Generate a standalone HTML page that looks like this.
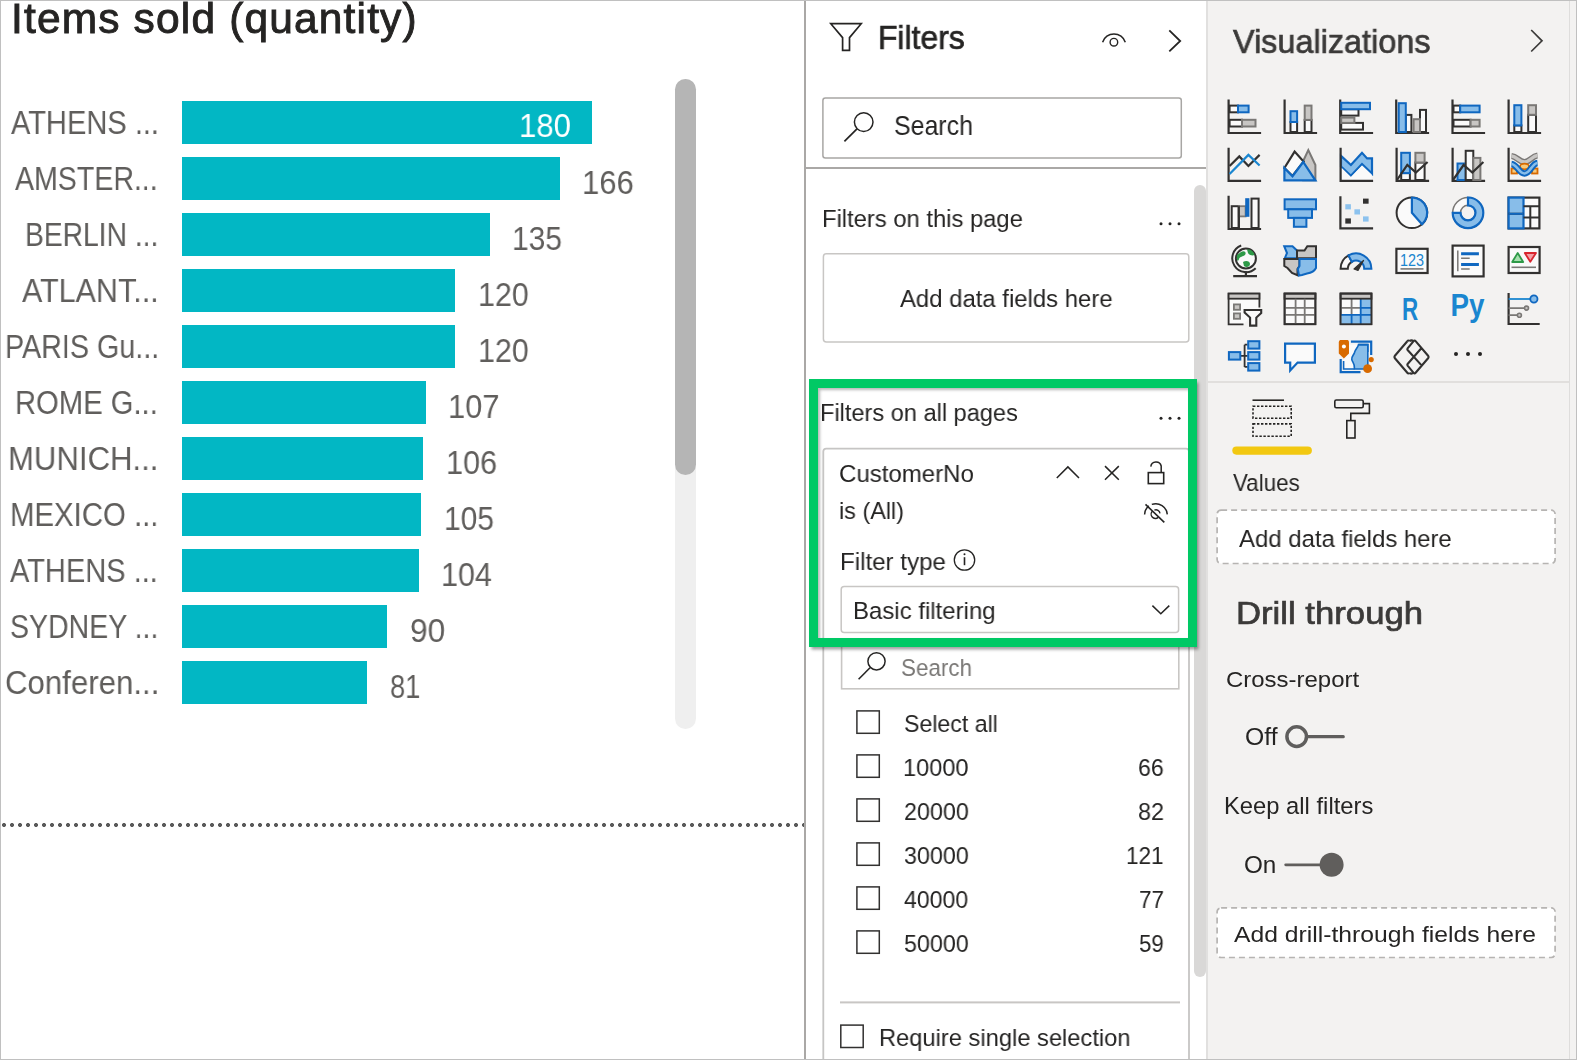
<!DOCTYPE html>
<html><head><meta charset="utf-8"><title>Power BI Filters</title>
<style>
html,body{margin:0;padding:0;}
body{width:1577px;height:1060px;position:relative;overflow:hidden;background:#fff;font-family:"Liberation Sans",sans-serif;}
.t{position:absolute;white-space:nowrap;transform-origin:0 0;will-change:transform;}
.bar{position:absolute;left:182px;height:43px;background:#02b7c4;}
#canvas{position:absolute;left:0;top:0;width:805px;height:1060px;background:#fff;overflow:hidden;}
#track{position:absolute;left:675px;top:79px;width:21px;height:650px;border-radius:10.5px;background:#efefef;}
#thumb{position:absolute;left:675px;top:79px;width:21px;height:396px;border-radius:10.5px;background:#b5b5b5;}
#dots{position:absolute;left:0;top:821px;width:805px;height:8px;background:radial-gradient(circle at 4px 4px,#5a5a5a 0,#5a5a5a 1.7px,rgba(90,90,90,0) 2.3px) 0 0/8px 8px repeat-x;}
#fsep{position:absolute;left:804px;top:0;width:2px;height:1060px;background:#aaa8a6;}
#fpane{position:absolute;left:806px;top:0;width:400px;height:1060px;background:#fff;}
#fthumb{position:absolute;left:1194px;top:185px;width:12px;height:792px;border-radius:6px;background:#d9d8d7;}
#vsep{position:absolute;left:1206px;top:0;width:2px;height:1060px;background:#e1e0df;}
#vpane{position:absolute;left:1208px;top:0;width:369px;height:1060px;background:#f3f2f1;}
#vline{position:absolute;left:1568.5px;top:0;width:1.6px;height:1060px;background:#dedddc;}
#frame{position:absolute;left:0;top:0;width:1575px;height:1058px;border:1px solid #c0c0c0;}
svg{position:absolute;left:0;top:0;}
#shadow{position:absolute;left:809px;top:379px;width:388px;height:268px;box-shadow:1.5px 2.5px 3px rgba(0,0,0,0.38);}
#ishadow{position:absolute;left:818px;top:388px;width:370px;height:250px;box-shadow:inset 2px 2px 3px rgba(0,0,0,0.28);}
</style></head><body>
<div id="canvas">
<div class="bar" style="top:101px;width:409.9px"></div><div class="bar" style="top:157px;width:378.1px"></div><div class="bar" style="top:213px;width:307.5px"></div><div class="bar" style="top:269px;width:273.3px"></div><div class="bar" style="top:325px;width:273.3px"></div><div class="bar" style="top:381px;width:243.7px"></div><div class="bar" style="top:437px;width:241.4px"></div><div class="bar" style="top:493px;width:239.1px"></div><div class="bar" style="top:549px;width:236.9px"></div><div class="bar" style="top:605px;width:205.0px"></div><div class="bar" style="top:661px;width:184.5px"></div>
<div id="track"></div><div id="thumb"></div>
<div id="dots"></div>
</div>
<div id="fsep"></div>
<div id="fpane"></div>
<div id="fthumb"></div>
<div id="vsep"></div>
<div id="vpane"></div>
<div id="vline"></div>
<svg width="1577" height="1060" viewBox="0 0 1577 1060">
<path d="M830.8,23.7 H861.2 L849.5,37.6 V50.3 H842.6 V37.6 Z" fill="none" stroke="#252423" stroke-width="1.7" stroke-linejoin="miter"/>
<path d="M1102.6,42.2 A11.9,11.9 0 0 1 1125.3,42.2" fill="none" stroke="#252423" stroke-width="1.5"/>
<circle cx="1113.9" cy="42.2" r="3.8" fill="none" stroke="#252423" stroke-width="1.4"/>
<path d="M1169.3,30.3 L1180.2,41 L1169.3,51.3" fill="none" stroke="#252423" stroke-width="1.8"/>
<rect x="822.9" y="97.9" width="358.4" height="60" rx="2.5" fill="#fff" stroke="#a8a6a4" stroke-width="1.5"/>
<circle cx="863.7" cy="122.1" r="9.3" fill="none" stroke="#252423" stroke-width="1.5"/>
<path d="M844.4,141.3 L857,128.8" stroke="#252423" stroke-width="1.7"/>
<rect x="806" y="167" width="400" height="2" fill="#aaa8a6"/>
<circle cx="1161" cy="223.8" r="1.5" fill="#252423"/>
<circle cx="1170" cy="223.8" r="1.5" fill="#252423"/>
<circle cx="1179" cy="223.8" r="1.5" fill="#252423"/>
<circle cx="1161" cy="418.3" r="1.5" fill="#252423"/>
<circle cx="1170" cy="418.3" r="1.5" fill="#252423"/>
<circle cx="1179" cy="418.3" r="1.5" fill="#252423"/>
<rect x="823.4" y="253.8" width="365.4" height="88.3" rx="3" fill="#fff" stroke="#c8c6c4" stroke-width="1.5"/>
<rect x="823.3" y="448.6" width="365.7" height="700" rx="3" fill="#fff" stroke="#c6c5c4" stroke-width="1.8"/>
<path d="M1056.8,478 L1067.9,466.9 L1079,478" fill="none" stroke="#252423" stroke-width="1.5"/>
<path d="M1105,466.1 L1118.8,479.8 M1118.8,466.1 L1105,479.8" stroke="#252423" stroke-width="1.5"/>
<rect x="1148.3" y="472.6" width="15.4" height="11" fill="none" stroke="#252423" stroke-width="1.6"/>
<path d="M1150.8,466.6 A5.3,5.3 0 0 1 1161.2,466 V472.6" fill="none" stroke="#252423" stroke-width="1.5"/>
<path d="M1144.6,514.4 A11.6,11.6 0 0 1 1148.8,505.8 M1151.8,504.4 A11.6,11.6 0 0 1 1167.3,514.4" fill="none" stroke="#252423" stroke-width="1.5"/>
<path d="M1145.5,504.4 L1164.3,522.4" stroke="#252423" stroke-width="1.6"/>
<path d="M1152.6,511 A4,4 0 0 0 1158.2,517.4 M1154.4,510.2 A4,4 0 0 1 1160,513.4" fill="none" stroke="#252423" stroke-width="1.4"/>
<circle cx="964.5" cy="560" r="10.2" fill="none" stroke="#252423" stroke-width="1.3"/>
<rect x="963.7" y="557.2" width="1.6" height="8" fill="#252423"/><circle cx="964.5" cy="554.2" r="1" fill="#252423"/>
<rect x="841.2" y="586.4" width="337.4" height="46" rx="3" fill="#fff" stroke="#c8c6c4" stroke-width="1.5"/>
<path d="M1152.4,605.6 L1160.8,613.8 L1169.3,605.6" fill="none" stroke="#252423" stroke-width="1.5"/>
<rect x="841.6" y="640" width="337.2" height="48.8" fill="#fff" stroke="#c8c6c4" stroke-width="1.6"/>
<circle cx="876.5" cy="661.3" r="8.6" fill="none" stroke="#252423" stroke-width="1.5"/>
<path d="M858.6,679.2 L870,667.8" stroke="#252423" stroke-width="1.6"/>
<rect x="856.9" y="710.9" width="22.4" height="22.4" fill="#fff" stroke="#323130" stroke-width="1.5"/>
<rect x="856.9" y="754.9" width="22.4" height="22.4" fill="#fff" stroke="#323130" stroke-width="1.5"/>
<rect x="856.9" y="798.9" width="22.4" height="22.4" fill="#fff" stroke="#323130" stroke-width="1.5"/>
<rect x="856.9" y="842.9" width="22.4" height="22.4" fill="#fff" stroke="#323130" stroke-width="1.5"/>
<rect x="856.9" y="886.9" width="22.4" height="22.4" fill="#fff" stroke="#323130" stroke-width="1.5"/>
<rect x="856.9" y="930.9" width="22.4" height="22.4" fill="#fff" stroke="#323130" stroke-width="1.5"/>
<rect x="840" y="1001.4" width="340" height="2" fill="#c8c6c4"/>
<rect x="840.8" y="1025.1" width="22.4" height="22.4" fill="#fff" stroke="#323130" stroke-width="1.5"/>
<rect x="813.5" y="383.5" width="379" height="259" fill="none" stroke="#00c965" stroke-width="9"/>
<path d="M1531.2,30 L1542,40.8 L1531.2,51.5" fill="none" stroke="#3b3a39" stroke-width="1.7"/>
<g transform="translate(1227,100)"><path d="M1.6,0.6 V33 H33" fill="none" stroke="#323130" stroke-width="2.2" stroke-linecap="square"/><rect x="2.60" y="5.60" width="8.40" height="6.70" fill="#fafafa" stroke="#323130" stroke-width="2"/><rect x="11.00" y="5.60" width="10.60" height="6.70" fill="#88bde9" stroke="#0f67c0" stroke-width="2"/><rect x="2.60" y="19.80" width="12.40" height="6.70" fill="#fafafa" stroke="#323130" stroke-width="2"/><rect x="15.00" y="19.80" width="13.50" height="6.70" fill="#c8c6c4" stroke="#7a7876" stroke-width="2"/></g>
<g transform="translate(1283,100)"><path d="M1.6,0.6 V33 H33" fill="none" stroke="#323130" stroke-width="2.2" stroke-linecap="square"/><rect x="7.50" y="22.00" width="6.60" height="10.00" fill="#fafafa" stroke="#323130" stroke-width="2"/><rect x="7.50" y="11.20" width="6.60" height="10.80" fill="#88bde9" stroke="#0f67c0" stroke-width="2"/><rect x="21.70" y="19.90" width="6.80" height="12.10" fill="#fafafa" stroke="#323130" stroke-width="2"/><rect x="21.70" y="5.60" width="6.80" height="14.30" fill="#c8c6c4" stroke="#7a7876" stroke-width="2"/></g>
<g transform="translate(1339,100)"><path d="M1.2,0.6 V33 H33" fill="none" stroke="#323130" stroke-width="2.2" stroke-linecap="square"/><rect x="2.20" y="9.20" width="17.30" height="6.40" fill="#fafafa" stroke="#323130" stroke-width="2"/><rect x="2.20" y="2.80" width="28.80" height="6.40" fill="#88bde9" stroke="#0f67c0" stroke-width="2"/><rect x="2.20" y="22.90" width="21.80" height="6.70" fill="#fafafa" stroke="#323130" stroke-width="2"/><rect x="2.20" y="17.60" width="13.20" height="5.30" fill="#c8c6c4" stroke="#7a7876" stroke-width="2"/></g>
<g transform="translate(1395,100)"><path d="M1.2,0.6 V33 H33" fill="none" stroke="#323130" stroke-width="2.2" stroke-linecap="square"/><rect x="10.80" y="14.90" width="5.60" height="17.10" fill="#fafafa" stroke="#323130" stroke-width="2"/><rect x="25.00" y="9.90" width="6.00" height="22.10" fill="#fafafa" stroke="#323130" stroke-width="2"/><rect x="18.60" y="19.20" width="6.40" height="12.80" fill="#c8c6c4" stroke="#7a7876" stroke-width="2"/><rect x="3.70" y="3.20" width="7.10" height="28.80" fill="#88bde9" stroke="#0f67c0" stroke-width="2"/></g>
<g transform="translate(1451,100)"><path d="M1.5,0.6 V33 H33" fill="none" stroke="#323130" stroke-width="2.2" stroke-linecap="square"/><rect x="2.50" y="5.60" width="6.70" height="6.70" fill="#fafafa" stroke="#323130" stroke-width="2"/><rect x="9.20" y="5.60" width="19.40" height="6.70" fill="#88bde9" stroke="#0f67c0" stroke-width="2"/><rect x="2.50" y="19.80" width="17.10" height="6.70" fill="#fafafa" stroke="#323130" stroke-width="2"/><rect x="19.60" y="19.80" width="9.00" height="6.70" fill="#c8c6c4" stroke="#7a7876" stroke-width="2"/></g>
<g transform="translate(1507,100)"><path d="M1.6,0.6 V33 H33" fill="none" stroke="#323130" stroke-width="2.2" stroke-linecap="square"/><rect x="7.30" y="25.40" width="7.10" height="6.60" fill="#fafafa" stroke="#323130" stroke-width="2"/><rect x="7.30" y="5.20" width="7.10" height="20.20" fill="#88bde9" stroke="#0f67c0" stroke-width="2"/><rect x="21.20" y="14.80" width="7.80" height="17.20" fill="#fafafa" stroke="#323130" stroke-width="2"/><rect x="21.20" y="5.20" width="7.80" height="9.60" fill="#c8c6c4" stroke="#7a7876" stroke-width="2"/></g>
<g transform="translate(1227,148)"><path d="M1.6,0.8 V32.8 H33" fill="none" stroke="#323130" stroke-width="2.2" stroke-linecap="square"/><polyline points="2.6,18 12.3,8.4 21.4,18 32.6,6.9" fill="none" stroke="#323130" stroke-width="2.2"/><polyline points="2.6,26.1 21.4,6.9 32.6,17.5" fill="none" stroke="#1a86d0" stroke-width="2.2"/></g>
<g transform="translate(1283,148)"><polygon points="20.2,13 25.3,2 32.4,17 32.4,32.2 20.2,32.2" fill="#c8c6c4" stroke="#7a7876" stroke-width="2"/><polygon points="1.4,20 11.6,3.6 20.6,13.6 9.5,28" fill="#fafafa" stroke="#323130" stroke-width="2.2"/><polygon points="1.4,20 9.5,28.2 20.2,14 32.4,32.4 1.4,32.4" fill="#88bde9" stroke="#0f67c0" stroke-width="2.2" stroke-linejoin="miter"/></g>
<g transform="translate(1339,148)"><polygon points="2,7.9 11.9,17 23,4.8 28.1,10.4 33,10.4 33,25.6 23,16 11.9,27.7 2,18.5" fill="#88bde9" stroke="#0f67c0" stroke-width="2.2"/><polygon points="2.6,19.8 11.9,29 23,17.4 32.6,26.6 32.6,32 2.6,32" fill="#fafafa"/><path d="M1.6,0.8 V32.8 H33" fill="none" stroke="#323130" stroke-width="2.2" stroke-linecap="square"/></g>
<g transform="translate(1395,148)"><path d="M1.6,0.8 V32.8 H33" fill="none" stroke="#323130" stroke-width="2.2" stroke-linecap="square"/><rect x="6.20" y="25.10" width="8.70" height="6.90" fill="#fafafa" stroke="#323130" stroke-width="2"/><rect x="6.20" y="4.80" width="8.70" height="20.30" fill="#88bde9" stroke="#0f67c0" stroke-width="2"/><rect x="20.40" y="14.50" width="9.20" height="17.50" fill="#fafafa" stroke="#323130" stroke-width="2"/><rect x="20.40" y="4.80" width="9.20" height="9.70" fill="#c8c6c4" stroke="#7a7876" stroke-width="2"/><polyline points="2,32 12.3,17 20.9,24.6 32.6,14" fill="none" stroke="#323130" stroke-width="2.2"/></g>
<g transform="translate(1451,148)"><path d="M1.6,0.8 V32.8 H33" fill="none" stroke="#323130" stroke-width="2.2" stroke-linecap="square"/><rect x="6.50" y="15.50" width="8.20" height="16.50" fill="#88bde9" stroke="#0f67c0" stroke-width="2"/><rect x="14.70" y="2.80" width="7.60" height="29.20" fill="#fafafa" stroke="#323130" stroke-width="2"/><rect x="22.30" y="9.90" width="7.10" height="22.10" fill="#c8c6c4" stroke="#7a7876" stroke-width="2"/><polyline points="2,32 12.6,17 21.3,24.6 32.4,14" fill="none" stroke="#323130" stroke-width="2.2"/></g>
<g transform="translate(1507,148)"><path d="M1.6,0.8 V32.8 H33" fill="none" stroke="#323130" stroke-width="2.2" stroke-linecap="square"/><path d="M4.5,8 C10,8.5 12,14 17.5,14 C23,14 25,8 30.5,7.5" fill="none" stroke="#7a7876" stroke-width="6.2"/><path d="M4.5,8 C10,8.5 12,14 17.5,14 C23,14 25,8 30.5,7.5" fill="none" stroke="#c8c6c4" stroke-width="3.4"/><rect x="4.50" y="20.50" width="5.50" height="5.00" fill="#f7c97a" stroke="#d86a00" stroke-width="1.8"/><rect x="25.00" y="20.50" width="5.50" height="5.00" fill="#f7c97a" stroke="#d86a00" stroke-width="1.8"/><ellipse cx="17.5" cy="18.5" rx="4.5" ry="2.8" fill="#f7c97a" stroke="#d86a00" stroke-width="1.8"/><path d="M4.5,16 C10,16.5 12,25.5 17.5,25.5 C23,25.5 25,15.5 30.5,15" fill="none" stroke="#0f67c0" stroke-width="6.4"/><path d="M4.5,16 C10,16.5 12,25.5 17.5,25.5 C23,25.5 25,15.5 30.5,15" fill="none" stroke="#88bde9" stroke-width="2.6"/></g>
<g transform="translate(1227,196)"><path d="M1.6,0.8 V33 H33" fill="none" stroke="#323130" stroke-width="2.2" stroke-linecap="square"/><rect x="4.70" y="10.20" width="7.10" height="21.80" fill="#fafafa" stroke="#323130" stroke-width="2"/><rect x="11.80" y="10.20" width="6.80" height="10.20" fill="#c8c6c4" stroke="#7a7876" stroke-width="1.8"/><rect x="18.2" y="2.2" width="4.2" height="18.6" fill="#0f67c0"/><rect x="24.50" y="2.60" width="7.10" height="29.40" fill="#fafafa" stroke="#323130" stroke-width="2"/><path d="M11.8,32 V10.2" stroke="#323130" stroke-width="2.2"/></g>
<g transform="translate(1283,196)"><rect x="1.60" y="3.30" width="31.40" height="10.00" fill="#88bde9" stroke="#0f67c0" stroke-width="2"/><rect x="5.20" y="13.30" width="23.80" height="8.60" fill="#88bde9" stroke="#0f67c0" stroke-width="2"/><rect x="10.90" y="21.90" width="12.50" height="8.90" fill="#88bde9" stroke="#0f67c0" stroke-width="2"/></g>
<g transform="translate(1339,196)"><path d="M1.4,1.4 V32.4 H33" fill="none" stroke="#323130" stroke-width="2.2" stroke-linecap="square"/><rect x="24" y="2.6" width="5.6" height="5.1" fill="#323130"/><rect x="6.3" y="8.2" width="5.6" height="5.2" fill="#8cc2ee"/><rect x="15.4" y="13.3" width="5.6" height="5.2" fill="#8cc2ee"/><rect x="6.3" y="22.4" width="5.6" height="5.2" fill="#323130"/><rect x="24" y="20.4" width="5.6" height="5.2" fill="#8cc2ee"/></g>
<g transform="translate(1395,196)"><circle cx="16.9" cy="16.8" r="15.3" fill="#fafafa" stroke="#323130" stroke-width="2"/><path d="M16.9,16.8 V1.5 A15.3,15.3 0 0 1 27,28.3 Z" fill="#88bde9" stroke="#0f67c0" stroke-width="2.2" stroke-linejoin="round"/></g>
<g transform="translate(1451,196)"><circle cx="17" cy="16.8" r="11.4" fill="none" stroke="#fafafa" stroke-width="8"/><circle cx="17" cy="16.8" r="15.3" fill="none" stroke="#7a7876" stroke-width="1.5"/><circle cx="17" cy="16.8" r="7.5" fill="none" stroke="#7a7876" stroke-width="1.5"/><path d="M17,1.5 A15.3,15.3 0 1 1 1.7,16.8 H9.5 A7.5,7.5 0 1 0 17,9.3 Z" fill="#88bde9" stroke="#0f67c0" stroke-width="2.2"/></g>
<g transform="translate(1507,196)"><rect x="1.60" y="1.60" width="30.80" height="30.80" fill="#fafafa" stroke="#323130" stroke-width="2.2"/><rect x="1.60" y="1.60" width="14.90" height="30.80" fill="#88bde9" stroke="#0f67c0" stroke-width="2.2"/><path d="M1.6,17.8 H16.5 M16.5,10.2 H32.4 M16.5,21.4 H32.4 M23.3,10.2 V32.4" stroke="#323130" stroke-width="2"/><path d="M1.6,17.8 H16.5" stroke="#0f67c0" stroke-width="2"/></g>
<g transform="translate(1227,244)"><circle cx="18.9" cy="14.5" r="10" fill="#fafafa" stroke="#323130" stroke-width="2"/><path d="M14,8 C17,6 20,8 18,11 C16,13 13,12 12,15 C11,19 9,15 10,11 Z M20,5.5 C23,5 27,7 27.5,11 C25,12 22,11 21,9 Z M16,18 C19,16 23,17 23,20 C23,23 19,24 17,22 Z" fill="#2e9a48"/><path d="M14.2,1.5 A13.8,13.8 0 1 0 28.7,24.3" fill="none" stroke="#323130" stroke-width="2"/><path d="M18.9,27.3 V32.2 M6.2,32.2 H30" stroke="#323130" stroke-width="2.2"/></g>
<g transform="translate(1283,244)"><path d="M1.2,2.2 H9.5 L14,6.5 V14.2 H1.8 L4,9 Z" fill="#88bde9" stroke="#0f67c0" stroke-width="2"/><path d="M14,6.5 H21.5 L24.3,2.2 H33 V14.2 H14 Z" fill="#c8c6c4" stroke="#323130" stroke-width="2"/><path d="M1.3,15 H16.5 V22 L14.5,25 V31.2 L9,29 L4.5,24 L1.3,22 Z" fill="#c8c6c4" stroke="#323130" stroke-width="2"/><path d="M16.5,15 H33 V24 C31,28 27,29 24,29.5 L19,31 L16,31.5 L14.8,25 L16.5,22 Z" fill="#88bde9" stroke="#0f67c0" stroke-width="2"/></g>
<g transform="translate(1339,244)"><path d="M1.6,24.8 A15.4,15.4 0 0 1 9.5,11.4 L12.8,17.8 A8.2,8.2 0 0 0 8.8,24.8 Z" fill="#fafafa" stroke="#323130" stroke-width="2"/><path d="M9.5,11.4 A15.4,15.4 0 0 1 32.4,24.8 H25.2 A8.2,8.2 0 0 0 12.8,17.8 Z" fill="#88bde9" stroke="#0f67c0" stroke-width="2"/><path d="M15,25 L24.5,16.5 L19,26.5 Z" fill="#323130" stroke="#323130" stroke-width="1.2" stroke-linejoin="round"/></g>
<g transform="translate(1395,244)"><rect x="1.40" y="4.80" width="31.20" height="24.20" fill="#fafafa" stroke="#323130" stroke-width="2.2"/><text x="5" y="22.2" font-family="Liberation Sans, sans-serif" font-size="16.8" fill="#1a86d0" textLength="24" lengthAdjust="spacingAndGlyphs">123</text><path d="M5.5,24.9 H28.5" stroke="#7a7876" stroke-width="1.6"/></g>
<g transform="translate(1451,244)"><rect x="1.60" y="1.60" width="31.00" height="30.80" fill="#fafafa" stroke="#323130" stroke-width="2.2"/><path d="M6.8,6.4 V27.2 M10.1,14.2 H18.7 M10.1,24.9 H18.7" stroke="#7a7876" stroke-width="1.5"/><path d="M10.1,9.7 H27.9 M10.1,20.6 H27.9" stroke="#0f67c0" stroke-width="3"/></g>
<g transform="translate(1507,244)"><rect x="1.60" y="3.00" width="31.00" height="26.00" fill="#fafafa" stroke="#323130" stroke-width="2.2"/><polygon points="5.2,18 10.7,9 16.2,18" fill="#a6e0ae" stroke="#2e9a48" stroke-width="1.8" stroke-linejoin="round"/><polygon points="17.8,9 29,9 23.3,17.8" fill="#f3a0a6" stroke="#d9262f" stroke-width="1.8" stroke-linejoin="round"/><path d="M4.5,23.3 H29" stroke="#7a7876" stroke-width="1.6"/></g>
<g transform="translate(1227,292)"><path d="M16.5,32.4 H1.6 V1.6 H32.4 V15.5" fill="#fafafa" stroke="#323130" stroke-width="1.8"/><rect x="1.60" y="1.60" width="30.80" height="5.10" fill="#c8c6c4" stroke="#323130" stroke-width="1.8"/><rect x="6.90" y="12.40" width="6.20" height="5.40" fill="#c8c6c4" stroke="#7a7876" stroke-width="1.8"/><rect x="6.90" y="21.40" width="6.20" height="5.40" fill="#c8c6c4" stroke="#7a7876" stroke-width="1.8"/><path d="M17.6,18 H34.2 V21 L29.3,25.6 V33.6 H23.1 V25.6 L17.6,20.5 Z" fill="#fafafa" stroke="#323130" stroke-width="2.1" stroke-linejoin="miter"/></g>
<g transform="translate(1283,292)"><rect x="1.60" y="1.60" width="30.80" height="30.60" fill="#fafafa" stroke="#323130" stroke-width="1.8"/><rect x="1.60" y="1.60" width="30.80" height="5.10" fill="#c8c6c4" stroke="#323130" stroke-width="1.8"/><path d="M12.6,6.7 V32.2 M21.7,6.7 V32.2 M1.6,15.8 H32.4 M1.6,22.9 H32.4" stroke="#7a7876" stroke-width="1.8"/><rect x="1.60" y="1.60" width="30.80" height="30.60" fill="none" stroke="#323130" stroke-width="1.8"/></g>
<g transform="translate(1339,292)"><rect x="1.60" y="1.60" width="30.80" height="30.60" fill="#fafafa" stroke="#323130" stroke-width="1.8"/><rect x="21.7" y="6.7" width="10.7" height="25.5" fill="#88bde9"/><rect x="1.6" y="22.9" width="30.8" height="9.3" fill="#88bde9"/><path d="M12.6,6.7 V22.9 M1.6,15.8 H21.7" stroke="#7a7876" stroke-width="1.8"/><path d="M21.7,6.7 V32.2 M12.6,22.9 V32.2 M21.7,15.8 H32.4 M1.6,22.9 H32.4" stroke="#0f67c0" stroke-width="1.8"/><rect x="1.60" y="1.60" width="30.80" height="5.10" fill="#c8c6c4" stroke="#323130" stroke-width="1.8"/><rect x="1.60" y="1.60" width="30.80" height="30.60" fill="none" stroke="#323130" stroke-width="1.8"/></g>
<g transform="translate(1395,292)"><text x="7" y="28" font-family="Liberation Sans, sans-serif" font-weight="bold" font-size="31" fill="#1a86d0" textLength="16.2" lengthAdjust="spacingAndGlyphs">R</text></g>
<g transform="translate(1451,292)"><text x="-0.5" y="24" font-family="Liberation Sans, sans-serif" font-weight="bold" font-size="31" fill="#1a86d0" textLength="34" lengthAdjust="spacingAndGlyphs">Py</text></g>
<g transform="translate(1507,292)"><path d="M1.6,1.1 V32 H32.7" fill="none" stroke="#323130" stroke-width="2.2"/><path d="M1.6,7 H23.1" stroke="#1a86d0" stroke-width="1.8"/><circle cx="26.9" cy="7" r="3.6" fill="#88bde9" stroke="#0f67c0" stroke-width="1.8"/><path d="M1.6,16.1 H17.5 M1.6,23.2 H10.4" stroke="#7a7876" stroke-width="1.8"/><circle cx="19.5" cy="16.1" r="2" fill="#c8c6c4" stroke="#7a7876" stroke-width="1.6"/><circle cx="12.4" cy="23.2" r="2" fill="#c8c6c4" stroke="#7a7876" stroke-width="1.6"/></g>
<g transform="translate(1227,340)"><path d="M13.3,15.8 H20.6 M17.6,4.7 V26.9 M17.6,4.7 H20.6 M17.6,26.9 H20.6" stroke="#323130" stroke-width="1.8" fill="none"/><rect x="1.90" y="12.10" width="11.40" height="7.50" fill="#88bde9" stroke="#0f67c0" stroke-width="2"/><rect x="21.20" y="1.20" width="11.20" height="7.40" fill="#88bde9" stroke="#0f67c0" stroke-width="2"/><rect x="21.20" y="12.10" width="11.20" height="7.50" fill="#88bde9" stroke="#0f67c0" stroke-width="2"/><rect x="21.20" y="23.10" width="11.20" height="7.50" fill="#88bde9" stroke="#0f67c0" stroke-width="2"/></g>
<g transform="translate(1283,340)"><path d="M2.1,3.6 H31.9 V22.6 H14.6 L7.2,30.4 V22.6 H2.1 Z" fill="#fafafa" stroke="#0f67c0" stroke-width="2.2"/></g>
<g transform="translate(1339,340)"><rect x="4.6" y="4.6" width="24.2" height="24.4" fill="#fafafa"/><path d="M28.8,4.6 H19.5 C18.8,8 16,9.5 15.5,12.5 C15,15 12.5,16 12.8,19.5 C13,22 16,23 15.5,29 H28.8 Z" fill="#88bde9" stroke="#0f67c0" stroke-width="1.6"/><path d="M4.6,21 V29 H15.5 M19.5,4.6 H28.8 V12" fill="none" stroke="#0f67c0" stroke-width="1.6"/><path d="M11.9,1.6 H32.2 V15 M1.7,19 V32.1 H21.5" fill="none" stroke="#0f67c0" stroke-width="2.2"/><path d="M-0.2,2.5 C-0.2,0.6 1,0 2,0 H8 C9,0 10,0.6 10,2.5 V13.5 L4.9,18.6 L-0.2,13.5 Z" fill="#d86a00"/><circle cx="4.9" cy="6.6" r="2" fill="#fff"/><circle cx="28.6" cy="28.7" r="4.4" fill="#d86a00"/><circle cx="32.2" cy="19.6" r="2.6" fill="#d86a00"/></g>
<g transform="translate(1395,340)"><path d="M12.3,1.2 L-0.3,16 Q-1,17 -0.3,18 L12.3,32.8 Q13.3,34 14.3,32.8 M12.3,1.2 Q13.3,0 14.3,1.2" fill="none" stroke="#323130" stroke-width="2.1" stroke-linejoin="round"/><path d="M18.6,1.2 Q19.6,0 20.6,1.2 L33.3,16 Q34,17 33.3,18 L20.6,32.8 Q19.6,34 18.6,32.8 L12.6,25.6 Q12,24.8 12.6,24 L26.3,8.3 M18.6,1.2 L12.6,8.4 Q12,9.2 12.6,10 L26.8,25.6 M14.3,1.2 Q16.5,-0.5 18.6,1.2 M14.3,32.8 Q16.5,34.5 18.6,32.8" fill="none" stroke="#323130" stroke-width="2.1" stroke-linejoin="round"/></g>
<circle cx="1456" cy="354" r="2" fill="#252423"/><circle cx="1468" cy="354" r="2" fill="#252423"/><circle cx="1480" cy="354" r="2" fill="#252423"/>
<rect x="1208" y="381" width="361" height="2" fill="#e1dfdd"/>
<path d="M1252.5,400.2 H1284" stroke="#252423" stroke-width="1.6"/>
<rect x="1253" y="406.2" width="38.2" height="12" fill="none" stroke="#252423" stroke-width="1.6" stroke-dasharray="2.4,1.6"/>
<rect x="1253" y="423.9" width="38.2" height="12.4" fill="none" stroke="#252423" stroke-width="1.6" stroke-dasharray="2.4,1.6"/>
<rect x="1334.8" y="400" width="28.4" height="7.8" rx="1.5" fill="none" stroke="#252423" stroke-width="1.6"/>
<path d="M1363.2,403.6 H1369.4 V413.4 H1350.8 V420.2" fill="none" stroke="#252423" stroke-width="1.6"/>
<rect x="1346.8" y="420.6" width="8.2" height="17.4" fill="none" stroke="#252423" stroke-width="1.6"/>
<rect x="1232.3" y="446.4" width="79.6" height="8.3" rx="4.1" fill="#f2c811"/>
<rect x="1217.1" y="510.2" width="338" height="53.3" rx="4" fill="#fff" stroke="#b6b4b2" stroke-width="1.7" stroke-dasharray="6,4"/>
<rect x="1217.1" y="907.9" width="338" height="49.6" rx="4" fill="#fff" stroke="#b6b4b2" stroke-width="1.7" stroke-dasharray="6,4"/>
<circle cx="1296.7" cy="736.6" r="9.8" fill="none" stroke="#5f5e5d" stroke-width="3.5"/>
<rect x="1306" y="734.9" width="38.8" height="3.4" rx="1.5" fill="#5f5e5d"/>
<rect x="1284.3" y="863.4" width="45" height="2.8" rx="1.4" fill="#605e5c"/>
<circle cx="1331.6" cy="864.7" r="12" fill="#605e5c"/>
</svg>
<div id="shadow"></div><div id="ishadow"></div>
<span class="t" id="title" style="left:10.80px;top:-1.61px;font-size:42.50px;line-height:42.50px;color:#252423;letter-spacing:1.150px;-webkit-text-stroke:0.9px #252423;">Items sold (quantity)</span>
<span class="t" id="lab0" style="left:10.58px;top:106.05px;font-size:33.72px;line-height:33.72px;color:#605e5c;transform:scaleX(0.8619);">ATHENS ...</span>
<span class="t" id="val0" style="left:518.74px;top:109.16px;font-size:33.72px;line-height:33.72px;color:#ffffff;transform:scaleX(0.9237);">180</span>
<span class="t" id="lab1" style="left:15.37px;top:162.05px;font-size:33.72px;line-height:33.72px;color:#605e5c;transform:scaleX(0.8464);">AMSTER...</span>
<span class="t" id="val1" style="left:582.03px;top:167.37px;font-size:32.85px;line-height:32.85px;color:#605e5c;transform:scaleX(0.9463);">166</span>
<span class="t" id="lab2" style="left:24.80px;top:218.05px;font-size:33.72px;line-height:33.72px;color:#605e5c;transform:scaleX(0.8372);">BERLIN ...</span>
<span class="t" id="val2" style="left:511.75px;top:223.37px;font-size:32.85px;line-height:32.85px;color:#605e5c;transform:scaleX(0.9126);">135</span>
<span class="t" id="lab3" style="left:21.89px;top:274.05px;font-size:33.72px;line-height:33.72px;color:#605e5c;transform:scaleX(0.9042);">ATLANT...</span>
<span class="t" id="val3" style="left:477.53px;top:279.37px;font-size:32.85px;line-height:32.85px;color:#605e5c;transform:scaleX(0.9272);">120</span>
<span class="t" id="lab4" style="left:4.64px;top:330.05px;font-size:33.72px;line-height:33.72px;color:#605e5c;transform:scaleX(0.8513);">PARIS Gu...</span>
<span class="t" id="val4" style="left:477.53px;top:335.37px;font-size:32.85px;line-height:32.85px;color:#605e5c;transform:scaleX(0.9272);">120</span>
<span class="t" id="lab5" style="left:15.28px;top:386.05px;font-size:33.72px;line-height:33.72px;color:#605e5c;transform:scaleX(0.8663);">ROME G...</span>
<span class="t" id="val5" style="left:447.65px;top:391.37px;font-size:32.85px;line-height:32.85px;color:#605e5c;transform:scaleX(0.9399);">107</span>
<span class="t" id="lab6" style="left:8.42px;top:442.05px;font-size:33.72px;line-height:33.72px;color:#605e5c;transform:scaleX(0.9233);">MUNICH...</span>
<span class="t" id="val6" style="left:445.78px;top:447.37px;font-size:32.85px;line-height:32.85px;color:#605e5c;transform:scaleX(0.9335);">106</span>
<span class="t" id="lab7" style="left:10.25px;top:498.05px;font-size:33.72px;line-height:33.72px;color:#605e5c;transform:scaleX(0.8709);">MEXICO ...</span>
<span class="t" id="val7" style="left:443.76px;top:503.37px;font-size:32.85px;line-height:32.85px;color:#605e5c;transform:scaleX(0.9126);">105</span>
<span class="t" id="lab8" style="left:10.41px;top:554.05px;font-size:33.72px;line-height:33.72px;color:#605e5c;transform:scaleX(0.8609);">ATHENS ...</span>
<span class="t" id="val8" style="left:441.10px;top:559.37px;font-size:32.85px;line-height:32.85px;color:#605e5c;transform:scaleX(0.9297);">104</span>
<span class="t" id="lab9" style="left:10.30px;top:610.05px;font-size:33.72px;line-height:33.72px;color:#605e5c;transform:scaleX(0.8450);">SYDNEY ...</span>
<span class="t" id="val9" style="left:409.94px;top:615.37px;font-size:32.85px;line-height:32.85px;color:#605e5c;transform:scaleX(0.9648);">90</span>
<span class="t" id="lab10" style="left:4.52px;top:666.05px;font-size:33.72px;line-height:33.72px;color:#605e5c;transform:scaleX(0.9252);">Conferen...</span>
<span class="t" id="val10" style="left:389.91px;top:671.37px;font-size:32.85px;line-height:32.85px;color:#605e5c;transform:scaleX(0.8328);">81</span>
<span class="t" id="filters" style="left:878.38px;top:20.89px;font-size:33.72px;line-height:33.72px;color:#252423;transform:scaleX(0.9441);-webkit-text-stroke:0.7px #252423;">Filters</span>
<span class="t" id="search1" style="left:893.82px;top:112.39px;font-size:27.33px;line-height:27.33px;color:#252423;transform:scaleX(0.9115);">Search</span>
<span class="t" id="fotp" style="left:821.59px;top:206.55px;font-size:24.42px;line-height:24.42px;color:#252423;transform:scaleX(0.9738);">Filters on this page</span>
<span class="t" id="adf1" style="left:900.15px;top:287.46px;font-size:24.56px;line-height:24.56px;color:#252423;transform:scaleX(0.9736);">Add data fields here</span>
<span class="t" id="foap" style="left:820.45px;top:401.40px;font-size:24.42px;line-height:24.42px;color:#252423;transform:scaleX(0.9656);">Filters on all pages</span>
<span class="t" id="custno" style="left:839.39px;top:462.44px;font-size:24.42px;line-height:24.42px;color:#252423;transform:scaleX(0.9843);">CustomerNo</span>
<span class="t" id="isall" style="left:839.40px;top:498.69px;font-size:24.13px;line-height:24.13px;color:#252423;transform:scaleX(0.9701);">is (All)</span>
<span class="t" id="ftype" style="left:839.61px;top:550.43px;font-size:24.56px;line-height:24.56px;color:#252423;transform:scaleX(0.9832);">Filter type</span>
<span class="t" id="basic" style="left:853.42px;top:598.80px;font-size:24.13px;line-height:24.13px;color:#252423;transform:scaleX(0.9938);">Basic filtering</span>
<span class="t" id="search2" style="left:901.47px;top:656.15px;font-size:24.27px;line-height:24.27px;color:#7a7876;transform:scaleX(0.9228);">Search</span>
<span class="t" id="selall" style="left:903.87px;top:711.67px;font-size:24.27px;line-height:24.27px;color:#252423;transform:scaleX(0.9529);">Select all</span>
<span class="t" id="row0" style="left:903.26px;top:755.63px;font-size:24.71px;line-height:24.71px;color:#252423;transform:scaleX(0.9532);">10000</span>
<span class="t" id="cnt0" style="left:1137.73px;top:755.65px;font-size:24.71px;line-height:24.71px;color:#252423;transform:scaleX(0.9368);">66</span>
<span class="t" id="row1" style="left:903.94px;top:799.63px;font-size:24.71px;line-height:24.71px;color:#252423;transform:scaleX(0.9434);">20000</span>
<span class="t" id="cnt1" style="left:1138.14px;top:799.65px;font-size:24.71px;line-height:24.71px;color:#252423;transform:scaleX(0.9468);">82</span>
<span class="t" id="row2" style="left:904.05px;top:843.63px;font-size:24.71px;line-height:24.71px;color:#252423;transform:scaleX(0.9426);">30000</span>
<span class="t" id="cnt2" style="left:1125.54px;top:843.63px;font-size:24.71px;line-height:24.71px;color:#252423;transform:scaleX(0.9108);">121</span>
<span class="t" id="row3" style="left:904.33px;top:887.63px;font-size:24.71px;line-height:24.71px;color:#252423;transform:scaleX(0.9336);">40000</span>
<span class="t" id="cnt3" style="left:1138.51px;top:887.65px;font-size:24.71px;line-height:24.71px;color:#252423;transform:scaleX(0.9095);">77</span>
<span class="t" id="row4" style="left:903.78px;top:931.63px;font-size:24.71px;line-height:24.71px;color:#252423;transform:scaleX(0.9424);">50000</span>
<span class="t" id="cnt4" style="left:1138.58px;top:931.65px;font-size:24.71px;line-height:24.71px;color:#252423;transform:scaleX(0.8989);">59</span>
<span class="t" id="reqsingle" style="left:878.55px;top:1025.78px;font-size:24.71px;line-height:24.71px;color:#252423;transform:scaleX(0.9590);">Require single selection</span>
<span class="t" id="viz" style="left:1232.57px;top:25.40px;font-size:33.72px;line-height:33.72px;color:#3b3a39;transform:scaleX(0.9608);-webkit-text-stroke:0.7px #3b3a39;">Visualizations</span>
<span class="t" id="values" style="left:1233.43px;top:470.56px;font-size:23.84px;line-height:23.84px;color:#252423;transform:scaleX(0.9382);">Values</span>
<span class="t" id="adf2" style="left:1238.84px;top:526.68px;font-size:24.27px;line-height:24.27px;color:#252423;transform:scaleX(0.9857);">Add data fields here</span>
<span class="t" id="drill" style="left:1235.60px;top:598.35px;font-size:31.54px;line-height:31.54px;color:#3b3a39;transform:scaleX(1.1003);-webkit-text-stroke:0.7px #3b3a39;">Drill through</span>
<span class="t" id="cross" style="left:1225.80px;top:667.52px;font-size:22.97px;line-height:22.97px;color:#252423;transform:scaleX(1.0428);">Cross-report</span>
<span class="t" id="off" style="left:1244.74px;top:725.62px;font-size:23.55px;line-height:23.55px;color:#252423;transform:scaleX(1.0502);">Off</span>
<span class="t" id="keep" style="left:1224.49px;top:795.02px;font-size:23.69px;line-height:23.69px;color:#252423;transform:scaleX(1.0035);">Keep all filters</span>
<span class="t" id="on" style="left:1244.25px;top:853.03px;font-size:23.98px;line-height:23.98px;color:#252423;transform:scaleX(1.0113);">On</span>
<span class="t" id="adt" style="left:1234.38px;top:923.30px;font-size:22.97px;line-height:22.97px;color:#252423;transform:scaleX(1.0747);">Add drill-through fields here</span>
<div id="frame"></div>
</body></html>
